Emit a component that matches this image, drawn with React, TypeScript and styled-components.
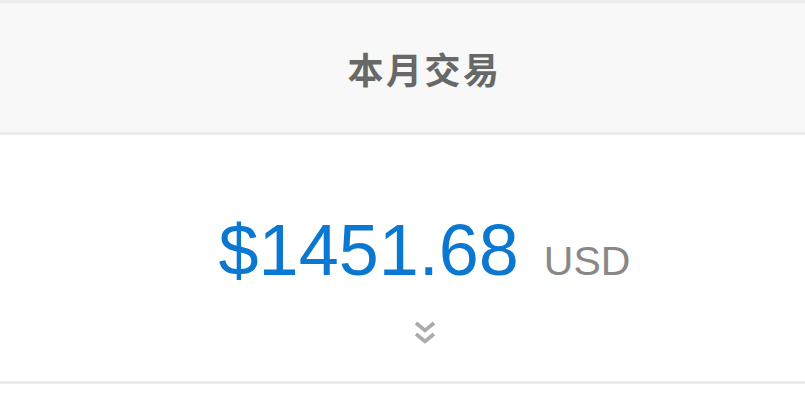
import React from "react";
import styled, { createGlobalStyle } from "styled-components";

const Global = createGlobalStyle`
  html, body { margin: 0; padding: 0; background: #ffffff; }
  body { font-family: "Liberation Sans", Arial, sans-serif; }
`;

const Page = styled.div`
  width: 805px;
  display: flex;
  flex-direction: column;
`;

const Header = styled.header`
  height: 129px;
  background: #f8f8f8;
  border-top: 3px solid #ececec;
  border-bottom: 3px solid #ececec;
  display: flex;
  align-items: center;
  justify-content: center;
  padding-left: 44px;
`;

const Title = styled.h1`
  margin: 0;
  font-family: "Noto Sans CJK SC", "Noto Sans", sans-serif;
  font-size: 36px;
  font-weight: 700;
  letter-spacing: 2.5px;
  color: #686868;
  line-height: 1;
`;

const Body = styled.section`
  height: 246px;
  border-bottom: 3px solid #ececec;
  display: flex;
  flex-direction: column;
  align-items: center;
  padding-left: 44px;
  box-sizing: content-box;
`;

const AmountRow = styled.div`
  margin-top: 79px;
  display: flex;
  align-items: baseline;
  gap: 25px;
`;

const Amount = styled.span`
  font-size: 72px;
  line-height: 72px;
  color: #0a77d1;
`;

const Currency = styled.span`
  font-size: 41px;
  line-height: 40px;
  color: #888888;
`;

const Expand = styled.button`
  margin-top: 34px;
  padding: 0;
  border: 0;
  background: none;
  width: 24px;
  height: 26px;
  display: flex;
  align-items: center;
  justify-content: center;
  cursor: pointer;
`;

export default function App() {
  return (
    <>
      <Global />
      <Page>
        <Header>
          <Title>本月交易</Title>
        </Header>
        <Body>
          <AmountRow>
            <Amount>$1451.68</Amount>
            <Currency>USD</Currency>
          </AmountRow>
          <Expand aria-label="展开">
            <svg width="24" height="26" viewBox="0 0 24 26" fill="none">
              <polyline points="3,3 12,10.5 21,3" stroke="#aaaaaa" strokeWidth="3.6" />
              <polyline points="3,14 12,21.5 21,14" stroke="#aaaaaa" strokeWidth="3.6" />
            </svg>
          </Expand>
        </Body>
      </Page>
    </>
  );
}
